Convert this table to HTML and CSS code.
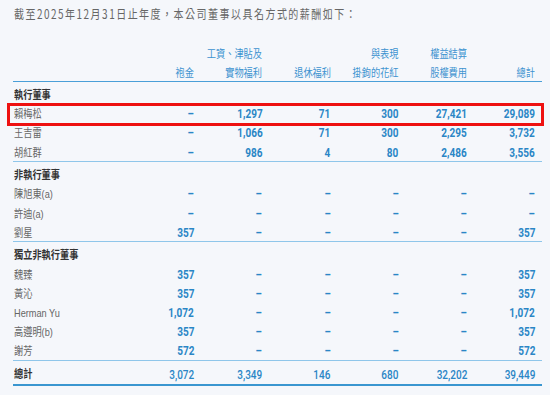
FILE: index.html
```html
<!DOCTYPE html>
<html lang="zh-Hant">
<head>
<meta charset="utf-8">
<title>董事薪酬</title>
<link rel="stylesheet" href="styles.css">
</head>
<body>
<div class="page">
  <p class="intro"><span class="t">截至2025年12月31日止年度，本公司董事以具名方式的薪酬如下：</span></p>
  <table class="pay">
    <colgroup>
      <col class="c-name">
      <col class="c-num"><col class="c-num"><col class="c-num"><col class="c-num"><col class="c-num"><col class="c-num">
    </colgroup>
    <thead>
      <tr class="h1"><th></th><th></th><th><span class="t">工資、津貼及</span></th><th></th><th><span class="t">與表現</span></th><th><span class="t">權益結算</span></th><th></th></tr>
      <tr class="h2"><th></th><th><span class="t">袍金</span></th><th><span class="t">實物福利</span></th><th><span class="t">退休福利</span></th><th><span class="t">掛鉤的花紅</span></th><th><span class="t">股權費用</span></th><th><span class="t">總計</span></th></tr>
    </thead>
    <tbody>
      <tr class="cat"><td colspan="7"><span class="t">執行董事</span></td></tr>
      <tr class="hl"><td class="name"><span class="t">賴梅松</span></td><td><span class="t">–</span></td><td><span class="t">1,297</span></td><td><span class="t">71</span></td><td><span class="t">300</span></td><td><span class="t">27,421</span></td><td><span class="t">29,089</span></td></tr>
      <tr><td class="name"><span class="t">王吉雷</span></td><td><span class="t">–</span></td><td><span class="t">1,066</span></td><td><span class="t">71</span></td><td><span class="t">300</span></td><td><span class="t">2,295</span></td><td><span class="t">3,732</span></td></tr>
      <tr><td class="name"><span class="t">胡紅群</span></td><td><span class="t">–</span></td><td><span class="t">986</span></td><td><span class="t">4</span></td><td><span class="t">80</span></td><td><span class="t">2,486</span></td><td><span class="t">3,556</span></td></tr>
    </tbody>
    <tbody>
      <tr class="cat"><td colspan="7"><span class="t">非執行董事</span></td></tr>
      <tr><td class="name"><span class="t">陳旭東(a)</span></td><td><span class="t">–</span></td><td><span class="t">–</span></td><td><span class="t">–</span></td><td><span class="t">–</span></td><td><span class="t">–</span></td><td><span class="t">–</span></td></tr>
      <tr><td class="name"><span class="t">許迪(a)</span></td><td><span class="t">–</span></td><td><span class="t">–</span></td><td><span class="t">–</span></td><td><span class="t">–</span></td><td><span class="t">–</span></td><td><span class="t">–</span></td></tr>
      <tr><td class="name"><span class="t">劉星</span></td><td><span class="t">357</span></td><td><span class="t">–</span></td><td><span class="t">–</span></td><td><span class="t">–</span></td><td><span class="t">–</span></td><td><span class="t">357</span></td></tr>
    </tbody>
    <tbody>
      <tr class="cat"><td colspan="7"><span class="t">獨立非執行董事</span></td></tr>
      <tr><td class="name"><span class="t">魏臻</span></td><td><span class="t">357</span></td><td><span class="t">–</span></td><td><span class="t">–</span></td><td><span class="t">–</span></td><td><span class="t">–</span></td><td><span class="t">357</span></td></tr>
      <tr><td class="name"><span class="t">黃沁</span></td><td><span class="t">357</span></td><td><span class="t">–</span></td><td><span class="t">–</span></td><td><span class="t">–</span></td><td><span class="t">–</span></td><td><span class="t">357</span></td></tr>
      <tr><td class="name"><span class="t">Herman Yu</span></td><td><span class="t">1,072</span></td><td><span class="t">–</span></td><td><span class="t">–</span></td><td><span class="t">–</span></td><td><span class="t">–</span></td><td><span class="t">1,072</span></td></tr>
      <tr><td class="name"><span class="t">高遵明(b)</span></td><td><span class="t">357</span></td><td><span class="t">–</span></td><td><span class="t">–</span></td><td><span class="t">–</span></td><td><span class="t">–</span></td><td><span class="t">357</span></td></tr>
      <tr><td class="name"><span class="t">謝芳</span></td><td><span class="t">572</span></td><td><span class="t">–</span></td><td><span class="t">–</span></td><td><span class="t">–</span></td><td><span class="t">–</span></td><td><span class="t">572</span></td></tr>
    </tbody>
    <tfoot>
      <tr class="total"><td class="name"><span class="t">總計</span></td><td><span class="t">3,072</span></td><td><span class="t">3,349</span></td><td><span class="t">146</span></td><td><span class="t">680</span></td><td><span class="t">32,202</span></td><td><span class="t">39,449</span></td></tr>
    </tfoot>
  </table>
</div>
</body>
</html>
```
FILE: styles.css
```css
html, body {
  margin: 0;
  background: #f5f7fb;
}

.page {
  padding: 5px 0 0 13.2px;
  font-family: "Liberation Sans", "Noto Sans CJK TC", sans-serif;
}

/* horizontally condensed text, as in the source rendering */
.t {
  display: inline-block;
  transform: scaleX(0.8);
  transform-origin: 100% 50%;
  margin-left: -40px;
}

.intro {
  margin: 0 0 20.5px 0.8px;
  font-family: "Noto Sans CJK TC", sans-serif;
  font-size: 12.5px;
  line-height: 18px;
  letter-spacing: 1.85px;
  color: #666;
  white-space: nowrap;
}

.intro .t,
.pay .name .t,
.pay .cat .t {
  transform-origin: 0 50%;
  margin-left: 0;
}

.pay {
  width: 529px;
  table-layout: fixed;
  border-collapse: separate;
  border-spacing: 0;
}

.c-name { width: 119.8px; }
.c-num { width: 68.2px; }

.pay th,
.pay td {
  padding: 0 7px 0 0;
  text-align: right;
  white-space: nowrap;
}

.pay thead th {
  font-family: "Noto Sans CJK TC", sans-serif;
  font-size: 11.5px;
  font-weight: 400;
  line-height: 19px;
  color: #3d93d0;
}

.pay .h2 th {
  line-height: 18px;
  border-bottom: 1.5px solid #4a9fd8;
}

.pay td {
  padding-top: 3px;
  font-family: Roboto, sans-serif;
  font-size: 12.5px;
  font-weight: 700;
  line-height: 16.2px;
  color: #2a86c6;
}

.pay td.name {
  text-align: left;
  padding-left: 0.8px;
  font-family: "Liberation Sans", "Noto Sans CJK TC", sans-serif;
  font-size: 11.5px;
  font-weight: 400;
  color: #666;
}

.pay .cat td {
  text-align: left;
  padding: 5px 0 0 0.8px;
  font-family: "Liberation Sans", "Noto Sans CJK TC", sans-serif;
  font-size: 11.5px;
  font-weight: 700;
  line-height: 16.6px;
  color: #333;
}

.pay tbody tr:last-child td {
  border-bottom: 1px solid #8fc6ea;
}

.pay .total td {
  padding-top: 5px;
  padding-bottom: 1.5px;
  line-height: 17px;
  font-weight: 500;
  border-bottom: 2.5px solid #3a96d0;
}

.pay .total td.name {
  font-weight: 700;
  color: #333;
}

.pay .hl td.name {
  position: relative;
}

/* red highlight frame around the first executive director row */
.pay .hl td.name::after {
  content: "";
  position: absolute;
  left: -6px;
  top: -0.6px;
  width: 537px;
  height: 23px;
  box-sizing: border-box;
  border: 3px solid #ee1111;
}
```
